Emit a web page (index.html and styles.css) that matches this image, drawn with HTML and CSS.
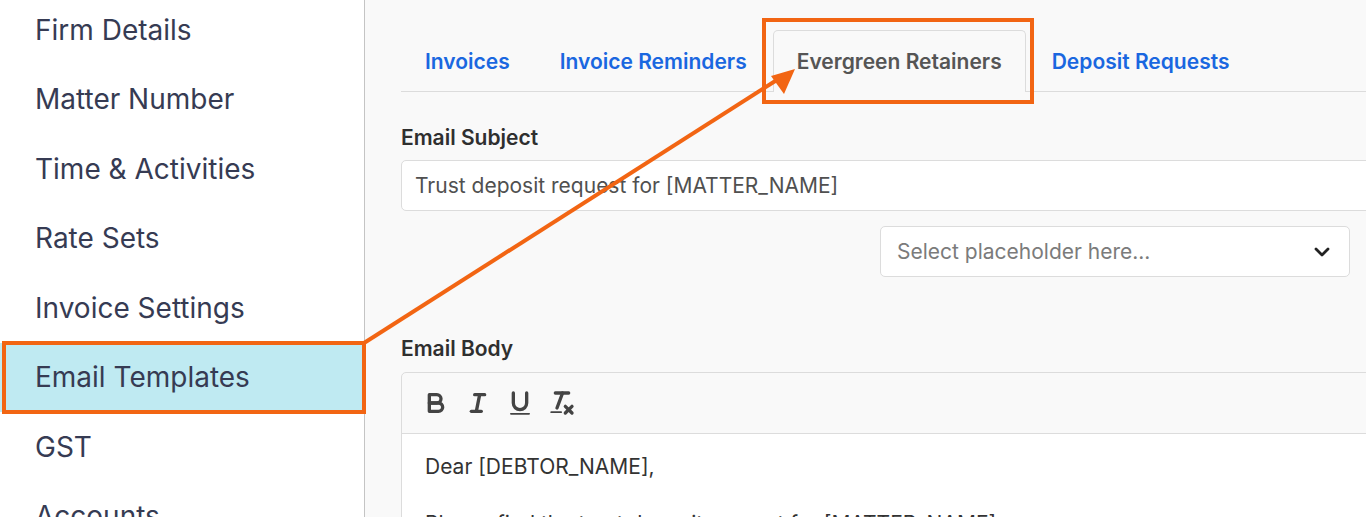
FILE: index.html
```html
<!DOCTYPE html>
<html lang="en">
<head>
    <meta charset="UTF-8">
    <meta name="viewport" content="width=device-width, initial-scale=1.0">
    <title>Settings - Email Templates</title>
    <link rel="stylesheet" href="styles.css">
</head>
<body>

<div class="page">
    <nav class="sidebar">
        <ul class="side-menu">
            <li>Firm Details</li>
            <li>Matter Number</li>
            <li>Time &amp; Activities</li>
            <li>Rate Sets</li>
            <li>Invoice Settings</li>
            <li class="active">Email Templates</li>
            <li>GST</li>
            <li>Accounts</li>
        </ul>
    </nav>

    <main class="content">
        <ul class="tabs">
            <li class="tab">Invoices</li>
            <li class="tab">Invoice Reminders</li>
            <li class="tab active">Evergreen Retainers</li>
            <li class="tab">Deposit Requests</li>
        </ul>

        <div class="form">
            <label class="field-label">Email Subject</label>
            <div class="text-input">Trust deposit request for [MATTER_NAME]</div>

            <div class="placeholder-row">
                <div class="select">
                    <span>Select placeholder here...</span>
                    <svg class="chevron" width="20" height="20" viewBox="0 0 20 20">
                        <polyline points="4,7 10,13 16,7" fill="none" stroke="#222" stroke-width="2.8" stroke-linecap="round" stroke-linejoin="round"/>
                    </svg>
                </div>
            </div>

            <label class="field-label body-label">Email Body</label>
            <div class="editor">
                <div class="toolbar">
                    <!-- bold -->
                    <button class="tool">
                        <svg viewBox="0 0 18 18">
                            <path class="stroke" d="M5,4H9.5A2.5,2.5,0,0,1,12,6.5v0A2.5,2.5,0,0,1,9.5,9H5V4Z"/>
                            <path class="stroke" d="M5,9h5.5A2.5,2.5,0,0,1,13,11.5v0A2.5,2.5,0,0,1,10.5,14H5V9Z"/>
                        </svg>
                    </button>
                    <!-- italic -->
                    <button class="tool">
                        <svg viewBox="0 0 18 18">
                            <line class="stroke" x1="7" x2="13" y1="4" y2="4"/>
                            <line class="stroke" x1="5" x2="11" y1="14" y2="14"/>
                            <line class="stroke" x1="8" x2="10" y1="14" y2="4"/>
                        </svg>
                    </button>
                    <!-- underline -->
                    <button class="tool">
                        <svg viewBox="0 0 18 18">
                            <path class="stroke" d="M5,3V9a4,4,0,0,0,4,4H9a4,4,0,0,0,4-4V3"/>
                            <rect class="fill" height="1" rx="0.5" ry="0.5" width="12" x="3" y="15"/>
                        </svg>
                    </button>
                    <!-- clear formatting -->
                    <button class="tool">
                        <svg viewBox="0 0 18 18">
                            <line class="stroke" x1="5" x2="13" y1="3" y2="3"/>
                            <line class="stroke" x1="6" x2="9.35" y1="12" y2="3"/>
                            <line class="stroke" x1="11" x2="15" y1="11" y2="15"/>
                            <line class="stroke" x1="15" x2="11" y1="11" y2="15"/>
                            <rect class="fill" height="1" rx="0.5" ry="0.5" width="7" x="2" y="14"/>
                        </svg>
                    </button>
                </div>
                <div class="editor-body">
                    <p>Dear [DEBTOR_NAME],</p>
                    <p>Please find the trust deposit request for [MATTER_NAME].</p>
                </div>
            </div>
        </div>
    </main>
</div>

<!-- annotation overlay -->
<div class="mark mark-side"></div>
<div class="mark mark-tab"></div>
<svg class="arrow" width="1366" height="517" viewBox="0 0 1366 517">
    <line x1="364" y1="343" x2="780" y2="78" stroke="#f26513" stroke-width="4"/>
    <polygon points="795,69 771,76 784,94" fill="#f26513"/>
</svg>

</body>
</html>
```

FILE: styles.css
```css
* {
    box-sizing: border-box;
}
html, body {
    margin: 0;
    height: 100%;
    overflow: hidden;
}
body {
    font-family: Inter, "Noto Sans", "Liberation Sans", sans-serif;
    background-color: #f9f9f9;
    color: #333;
}
.page {
    display: flex;
    height: 100%;
}
.sidebar {
    width: 365px;
    flex-shrink: 0;
    background-color: #fff;
    border-right: 1px solid #c4c4c4;
}
.side-menu {
    list-style: none;
    margin: -5px 0 0;
    padding: 0;
}
.side-menu li {
    height: 69.5px;
    display: flex;
    align-items: center;
    padding-left: 35px;
    font-size: 28px;
    color: #363b53;
}
.side-menu li.active {
    background-color: #bfeaf2;
}
.content {
    flex: 1;
    padding: 30px 0 0 36px;
    overflow: hidden;
}
.tabs {
    list-style: none;
    margin: 0;
    padding: 0;
    display: flex;
    gap: 2px;
    border-bottom: 1px solid #dcdcdc;
    width: 1100px;
}
.tab {
    height: 62px;
    padding: 0 23px;
    display: flex;
    align-items: center;
    font-size: 21px;
    font-weight: 600;
    color: #1a67e0;
    border: 1px solid transparent;
    border-bottom: none;
    border-radius: 5px 5px 0 0;
    margin-bottom: -1px;
}
.tab.active {
    color: #555;
    border-color: #dcdcdc;
    background-color: #f9f9f9;
}
.form {
    width: 1000px;
    padding-top: 34px;
}
.field-label {
    display: block;
    font-size: 21px;
    line-height: 24px;
    font-weight: 600;
    color: #2f2f2f;
    margin-bottom: 10px;
}
.text-input {
    height: 51px;
    border: 1px solid #dcdcdc;
    border-radius: 5px;
    background-color: #fff;
    display: flex;
    align-items: center;
    padding-left: 13px;
    font-size: 21px;
    color: #505050;
}
.placeholder-row {
    display: flex;
    justify-content: flex-end;
    padding: 15px 51px 0 0;
}
.select {
    width: 470px;
    height: 51px;
    border: 1px solid #dcdcdc;
    border-radius: 5px;
    background-color: #fff;
    display: flex;
    align-items: center;
    justify-content: space-between;
    padding: 0 16px;
    font-size: 21px;
    color: #7b7b7b;
}
.chevron {
    margin-right: 1px;
}
.body-label {
    margin-top: 60px;
    margin-bottom: 11px;
}
.editor {
    border: 1px solid #dcdcdc;
    border-radius: 5px 5px 0 0;
}
.toolbar {
    height: 61px;
    display: flex;
    align-items: center;
    padding-left: 13px;
    border-bottom: 1px solid #dcdcdc;
}
.tool {
    width: 42px;
    height: 40px;
    padding: 0;
    border: none;
    background: none;
    display: flex;
    align-items: center;
    justify-content: center;
}
.tool svg {
    width: 30px;
    height: 30px;
}
.stroke {
    fill: none;
    stroke: #444;
    stroke-width: 2;
    stroke-linecap: round;
    stroke-linejoin: round;
}
.fill {
    fill: #444;
}
.editor-body {
    background-color: #fff;
    padding: 20px 23px;
    font-size: 21px;
    line-height: 26px;
    color: #333;
    height: 200px;
}
.editor-body p {
    margin: 0 0 31px;
}
/* annotation overlay */
.mark {
    position: absolute;
    border: 4px solid #f26513;
}
.mark-side {
    left: 2px;
    top: 341px;
    width: 364px;
    height: 73px;
}
.mark-tab {
    left: 762px;
    top: 18px;
    width: 272px;
    height: 86px;
}
.arrow {
    position: absolute;
    left: 0;
    top: 0;
    pointer-events: none;
}
```
